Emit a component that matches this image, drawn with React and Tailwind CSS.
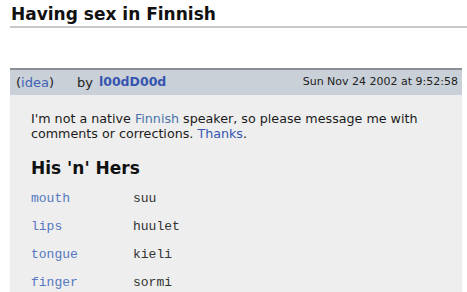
const rows = [
  ["mouth", "suu"],
  ["lips", "huulet"],
  ["tongue", "kieli"],
  ["finger", "sormi"],
];

export default function App() {
  return (
    <div className="h-[292px] w-[467px] overflow-hidden bg-white font-['DejaVu_Sans',Verdana,sans-serif] text-[#111]">
      <h1 className="ml-[10px] border-b-2 border-[#c8c8c8] pl-[1px] pt-[4px] pb-[1px] text-[17px] leading-[21px] font-bold">
        Having sex in Finnish
      </h1>

      <div className="ml-[10px] mt-[40px] w-[452px] border-t-2 border-[#8a8f96] bg-[#eeeeee]">
        <div className="flex h-[25px] items-center bg-[#c9d0d8] pl-[6px] pr-[4px] text-[13px]">
          <span className="text-[#222]">
            (<span className="text-[#3f62b5]">idea</span>)
          </span>
          <span className="ml-[23px] text-[#222]">by</span>
          <span className="ml-[6px] text-[12.5px] font-bold text-[#3555b0]">l00dD00d</span>
          <span className="ml-auto text-[11px] text-[#222]">Sun Nov 24 2002 at 9:52:58</span>
        </div>

        <div className="px-[21px] pt-[16px]">
          <p className="text-[12.7px] leading-[15px] text-[#1a1a1a]">
            I'm not a native <span className="text-[#4a72a8]">Finnish</span> speaker, so please message me with
            comments or corrections. <span className="text-[#3555b0]">Thanks</span>.
          </p>
          <h2 className="mt-[17px] text-[17px] leading-[21px] font-bold">His 'n' Hers</h2>
          <div className="mt-[6px] font-['Liberation_Mono',monospace] text-[13px]">
            {rows.map(([en, fi]) => (
              <div key={en} className="flex h-[28px] items-center">
                <span className="w-[102px] text-[#5577c0]">{en}</span>
                <span className="text-[#333]">{fi}</span>
              </div>
            ))}
          </div>
        </div>
      </div>
    </div>
  );
}
